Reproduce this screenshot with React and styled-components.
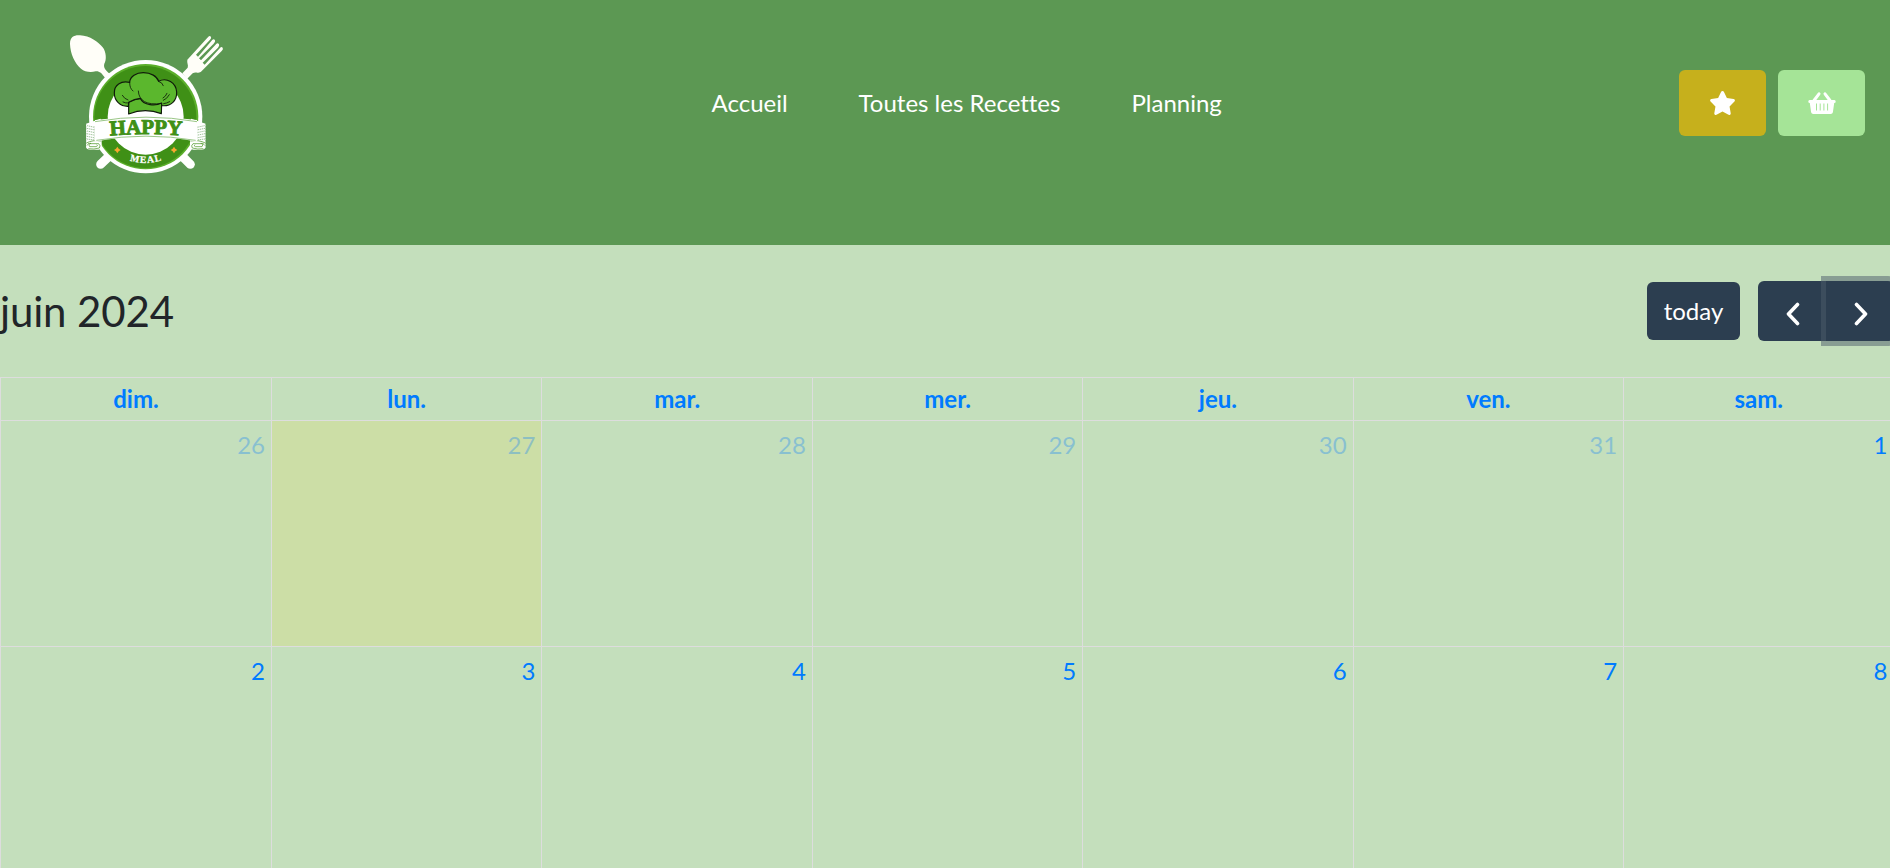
import React from "react";
import styled, { createGlobalStyle } from "styled-components";
import { FaStar } from "react-icons/fa6";

const GlobalStyle = createGlobalStyle`
  *, *::before, *::after { box-sizing: border-box; }
  html, body { margin: 0; height: 100%; overflow: hidden; }
  body {
    background: #c4dfbc;
    color: #212529;
    font-family: Lato, "Liberation Sans", sans-serif;
    font-size: 24px;
    line-height: 1.5;
    font-variant-ligatures: none;
  }
`;

const Page = styled.div`
  height: 100vh;
  overflow: hidden;
`;

const Header = styled.header`
  display: grid;
  grid-template-columns: 711.5px 1fr auto;
  align-items: start;
  height: 245px;
  padding: 20px 25px 0 0;
  background: #5c9853;
`;

const Brand = styled.a`
  display: block;
  width: 190px;
  height: 170px;
  margin-left: 50px;

  svg { display: block; }
`;

const Nav = styled.nav`
  display: flex;
  gap: 71px;
  padding-top: 65px;
`;

const NavLink = styled.a`
  color: #fff;
  text-decoration: none;
  white-space: nowrap;
`;

const Actions = styled.div`
  display: flex;
  gap: 12px;
  padding-top: 50px;
`;

const ActionButton = styled.button`
  display: flex;
  align-items: center;
  justify-content: center;
  width: 87px;
  height: 66px;
  padding: 0;
  border: 0;
  border-radius: 6px;
  color: #fff;
  font-size: 24px;
  background: ${(p) => p.$color};

  svg { width: ${(p) => p.$iconWidth}px; height: 24px; }
`;

const Calendar = styled.section`
  width: 1894.5px;
`;

const Toolbar = styled.div`
  display: flex;
  align-items: center;
  justify-content: space-between;
  height: 132px;
  padding-right: 0.5px;
`;

const Title = styled.h2`
  margin: 0;
  font-size: 42px;
  font-weight: 400;
  letter-spacing: -0.15px;
  line-height: 50px;
`;

const Controls = styled.div`
  display: flex;
  align-items: center;
  gap: 18px;
`;

const ToolButton = styled.button`
  height: 58px;
  width: 93px;
  padding: 0;
  border: 0;
  border-radius: 6px;
  background: #2c3e50;
  color: #fff;
  font: inherit;
`;

const ButtonGroup = styled.div`
  display: flex;
`;

const ArrowButton = styled.button`
  display: flex;
  align-items: center;
  justify-content: center;
  width: 68px;
  height: 60px;
  padding: 5px 0 0 2px;
  border: 0;
  border-radius: ${(p) => (p.$side === "left" ? "6px 0 0 6px" : "0 6px 6px 0")};
  background: #2c3e50;
  box-shadow: ${(p) => (p.$focused ? "0 0 0 5px rgba(76, 91, 106, 0.5)" : "none")};
`;

const Table = styled.div`
  display: grid;
  grid-template-columns: 271px repeat(6, 1fr);
  grid-template-rows: 43px 226px 226px;
  border-top: 1px solid #ddd;
  border-left: 1px solid #ddd;
`;

const DayHead = styled.div`
  border-right: 1px solid #ddd;
  border-bottom: 1px solid #ddd;
  color: #007bff;
  font-weight: 700;
  line-height: 41px;
  text-align: center;
`;

const DayCell = styled.div`
  padding: 6px 6px 0;
  border-right: 1px solid #ddd;
  border-bottom: 1px solid #ddd;
  background: ${(p) => (p.$today ? "rgba(255, 220, 40, 0.15)" : "transparent")};
  background-clip: padding-box;
  text-align: right;
`;

const DayNumber = styled.a`
  color: #007bff;
  opacity: ${(p) => (p.$outside ? 0.3 : 1)};
`;

const days = ["dim.", "lun.", "mar.", "mer.", "jeu.", "ven.", "sam."];
const dates = [26, 27, 28, 29, 30, 31, 1, 2, 3, 4, 5, 6, 7, 8];

function Chevron({ flip }) {
  return (
    <svg width="14" height="24" viewBox="0 0 14 24" fill="none" stroke="#fff" strokeWidth="3.6" strokeLinecap="round" strokeLinejoin="round">
      <path d={flip ? "M2.5 2.5 L11.5 12 L2.5 21.5" : "M11.5 2.5 L2.5 12 L11.5 21.5"} />
    </svg>
  );
}

function Basket() {
  return (
    <svg viewBox="0 0 28 24" fill="#fff">
      <path d="M11 2.8 L6 9.5 M17 2.8 L22 9.5" stroke="#fff" strokeWidth="3" strokeLinecap="round" />
      <path
        fillRule="evenodd"
        d="M1.6 9 H26.4 Q27.7 9 27.7 10.5 Q27.7 12 26.2 12 L24.9 21.2 Q24.5 23 22.8 23 H5.2 Q3.5 23 3.1 21.2 L1.8 12 Q.3 12 .3 10.5 Q.3 9 1.6 9 Z M8 12.5 V19.5 H9 V12.5 Z M11.7 12.5 V19.5 H12.7 V12.5 Z M15.4 12.5 V19.5 H16.4 V12.5 Z M19.1 12.5 V19.5 H20.1 V12.5 Z"
      />
    </svg>
  );
}

function Scroll() {
  return (
    <g>
      <path d="M152 296 L108 311 V382 Q110 389 121 389 H146 Q155 387 155 376 V361 L152 358 Z" fill="#fff" />
      <g fill="none" stroke="#5c9853" strokeWidth="1.8">
        <path d="M111 317 l23 5M110 325 l25 5M111 333 l24 5M110 341 l26 5M111 349 l25 5M110 357 l25 3" strokeDasharray="4 2" />
        <path d="M108 311 V380M135 318 V358" strokeWidth="1.2" strokeDasharray="5 2" />
      </g>
      <g fill="none" stroke="#3f9016" strokeWidth="2">
        <path d="M109 369 Q128 359 154 363 M112 376 Q113 368 123 370 M115 386 Q132 389 148 384 Q153 377 146 371 H120 Q114 374 119 380 H139 Q145 378 140 374" />
      </g>
    </g>
  );
}

function Logo() {
  return (
    <svg width="190" height="170" viewBox="0 0 570 510" role="img" aria-label="Happy Meal">
      <defs>
        <path id="happy-arc" d="M176 347 Q288 337 402 347" />
        <path id="meal-arc" d="M234 420 Q288 438 344 418" />
      </defs>
      <g stroke="#fff" strokeLinecap="round" strokeWidth="27">
        <path d="M178 408 L152 433" />
        <path d="M396 408 L421 433" />
      </g>
      <path d="M60 72 C60 49 73 45 90 46 C120 47 145 67 158 82 C169 95 170 121 163 131 C160 140 164 149 180 162 L167 176 C154 158 148 153 137 154 C120 158 104 155 93 146 C74 130 61 101 60 72 Z" fill="#fffef8" />
      <path d="M397 160 L413 143 C416 135 410 128 412 119 L475 50 Q480 45 483 51 Q485 54 480 59 L438 104 L444 110 L486 61 Q491 55 495 61 Q497 65 491 71 L447 115 L453 121 L498 73 Q503 67 507 73 Q509 77 504 83 L458 128 L464 134 L510 84 Q514 79 518 83 Q521 87 515 93 L453 155 C444 161 435 155 428 160 L411 177 Z" fill="#fffef8" />
      <circle cx="287" cy="290" r="170" fill="#fff" />
      <circle cx="287" cy="290" r="158" fill="#5bae2b" />
      <circle cx="286" cy="291" r="153" fill="#3f9016" />
      <circle cx="287" cy="290" r="114" fill="#fff" />
      <g stroke="#101b0b" strokeWidth="3.5" strokeLinejoin="round" strokeLinecap="round">
        <path d="M236 247 Q253 237 271 235 L335 250 L334 281 Q285 262 236 282 Z" fill="#5bb72d" />
        <path d="M235 259 C210 260 193 242 193 219 C192 195 213 181 239 187 C240 169 259 158 280 158 C303 158 321 169 326 184 C350 171 378 188 380 216 C381 241 364 260 335 257 L335 249 C318 258 280 258 271 235 Q253 237 236 247 Z" fill="#5bb72d" />
        <path d="M239 187 C239 200 242 207 249 213 M326 184 Q338 188 340 197 M265 213 C266 242 290 257 334 250 M217 226 Q223 237 234 240 M358 224 Q351 237 340 241 M219 246 Q227 250 235 249 M359 245 Q350 250 341 251 M351 220 Q348 229 339 234" fill="none" strokeWidth="2.5" />
      </g>
      <Scroll />
      <g transform="translate(575 0) scale(-1 1)">
        <Scroll />
      </g>
      <path d="M135 300 Q288 279 441 300 L442 365 Q288 335 134 365 Z" fill="#fff" />
      <path d="M135 305 Q288 278 441 305 M139 361 Q288 336 437 361" fill="none" stroke="#67a94a" strokeWidth="2" />
      <text fill="#3f9016" stroke="#3f9016" strokeWidth="2.8" fontFamily="Liberation Serif, serif" fontWeight="700" fontSize="63">
        <textPath href="#happy-arc" startOffset="4" textLength="216" lengthAdjust="spacingAndGlyphs">HAPPY</textPath>
      </text>
      <text fill="#fff" stroke="#fff" strokeWidth="0.8" fontFamily="Liberation Serif, serif" fontWeight="700" fontSize="29">
        <textPath href="#meal-arc" startOffset="6" textLength="96" lengthAdjust="spacing">MEAL</textPath>
      </text>
      <g fill="#f6a82f">
        <path d="M202 380 L206 386 L212 390 L206 394 L202 400 L198 394 L192 390 L198 386 Z" />
        <path d="M372 380 L376 386 L382 390 L376 394 L372 400 L368 394 L362 390 L368 386 Z" />
      </g>
    </svg>
  );
}

export default function App() {
  return (
    <Page>
      <GlobalStyle />
      <Header>
        <Brand><Logo /></Brand>
        <Nav>
          <NavLink>Accueil</NavLink>
          <NavLink>Toutes les Recettes</NavLink>
          <NavLink>Planning</NavLink>
        </Nav>
        <Actions>
          <ActionButton $color="#c6b01c" $iconWidth={27} aria-label="Favoris"><FaStar /></ActionButton>
          <ActionButton $color="#a5e497" $iconWidth={28} aria-label="Panier"><Basket /></ActionButton>
        </Actions>
      </Header>
      <Calendar>
        <Toolbar>
          <Title>juin 2024</Title>
          <Controls>
            <ToolButton>today</ToolButton>
            <ButtonGroup>
              <ArrowButton $side="left" aria-label="Mois précédent"><Chevron /></ArrowButton>
              <ArrowButton $side="right" $focused aria-label="Mois suivant"><Chevron flip /></ArrowButton>
            </ButtonGroup>
          </Controls>
        </Toolbar>
        <Table>
          {days.map((d) => <DayHead key={d}>{d}</DayHead>)}
          {dates.map((n, i) => (
            <DayCell key={n} $today={n === 27}>
              <DayNumber $outside={i < 6}>{n}</DayNumber>
            </DayCell>
          ))}
        </Table>
      </Calendar>
    </Page>
  );
}
